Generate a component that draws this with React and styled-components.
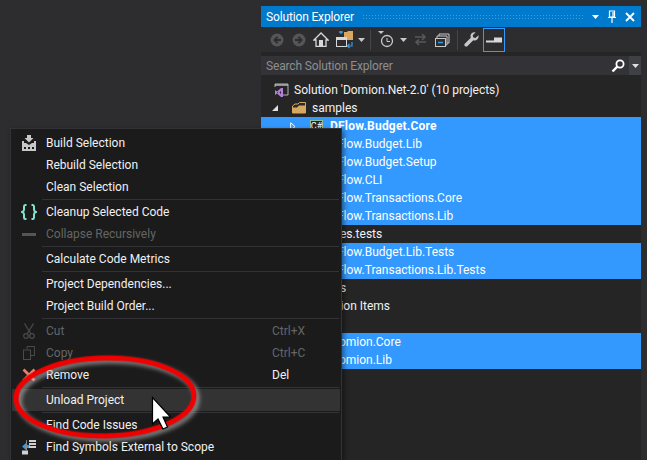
import React from "react";
import styled, { createGlobalStyle } from "styled-components";

const Global = createGlobalStyle`
  html, body {
    margin: 0;
    padding: 0;
    background: #2d2d30;
  }
`;

const Page = styled.div`
  position: relative;
  width: 647px;
  height: 460px;
  overflow: hidden;
  box-sizing: border-box;
  padding: 6px 6px 0 261px;
  background: #2d2d30;
  font-family: "Roboto", "Liberation Sans", sans-serif;
  font-size: 12px;
  color: #f1f1f1;
`;

const Panel = styled.div`
  display: flex;
  flex-direction: column;
  height: 454px;
  background: #252526;
`;

const TitleBar = styled.div`
  display: flex;
  align-items: center;
  height: 21px;
  flex: none;
  padding: 0 0 0 5px;
  background: #007acc;
  color: #fff;
  font-size: 12px;
  letter-spacing: -0.15px;
`;

const Grip = styled.div`
  flex: 1;
  height: 5px;
  margin: 0 8px 0 8px;
  background-image: radial-gradient(#3e9fdd 0.7px, transparent 0.8px);
  background-size: 3px 3px;
`;

const TitleButtons = styled.div`
  display: flex;
  align-items: center;
  gap: 9px;
  padding-right: 6px;
`;

const Toolbar = styled.div`
  display: flex;
  align-items: center;
  height: 25px;
  flex: none;
  padding-left: 5px;
  background: #2d2d30;
`;

const ToolIcon = styled.span`
  display: flex;
  align-items: center;
  justify-content: center;
  width: ${props => props.w || 22}px;
  height: 22px;
  flex: none;
`;

const ToolSep = styled.span`
  width: 1px;
  height: 20px;
  flex: none;
  margin: 0 3px 0 ${props => props.before || 3}px;
  background: #46464a;
`;

const ToggleButton = styled.span`
  display: flex;
  align-items: center;
  justify-content: center;
  width: 20px;
  height: 22px;
  flex: none;
  margin-left: 2px;
  border: 1px solid #3399ff;
`;

const SearchBox = styled.div`
  display: flex;
  align-items: center;
  height: 19px;
  flex: none;
  margin: 4px 0 3px;
  padding-left: 5px;
  background: #333337;
  color: #8e8e8e;
`;

const SearchText = styled.span`
  flex: 1;
  letter-spacing: -0.15px;
`;

const SearchDrop = styled.span`
  display: flex;
  align-items: center;
  justify-content: center;
  width: 12px;
  height: 19px;
  background: #3f3f46;
  margin-left: 4px;
`;

const Tree = styled.div`
  padding-top: 3px;
`;

const Row = styled.div`
  display: flex;
  align-items: center;
  height: 18px;
  padding-left: ${props => props.indent}px;
  background: ${props => (props.selected ? "#3399ff" : "transparent")};
  color: ${props => (props.selected ? "#fff" : "#f1f1f1")};
  font-weight: ${props => (props.bold ? 700 : 400)};
  letter-spacing: ${props => (props.bold ? "0.2px" : "0")};
  white-space: nowrap;
`;

const Expander = styled.span`
  display: flex;
  align-items: center;
  justify-content: center;
  width: 11px;
  flex: none;
  margin-right: 12px;
`;

const RowIcon = styled.span`
  display: flex;
  align-items: center;
  width: 15px;
  flex: none;
  margin-right: 5px;
`;

const Menu = styled.div`
  position: absolute;
  left: 10px;
  top: 128px;
  width: 332px;
  height: 340px;
  box-sizing: border-box;
  padding: 3px 1px 0;
  background: #1b1b1c;
  border: 1px solid #333337;
  box-shadow: 2px 2px 5px rgba(0, 0, 0, 0.45);
`;

const Item = styled.div`
  display: flex;
  align-items: center;
  height: 22px;
  background: ${props => (props.hover ? "#333334" : "transparent")};
  color: ${props => (props.disabled ? "#656565" : "#f1f1f1")};
`;

const ItemIcon = styled.span`
  display: flex;
  align-items: center;
  justify-content: center;
  width: 34px;
  flex: none;
`;

const ItemLabel = styled.span`
  flex: 1;
`;

const Shortcut = styled.span`
  width: 68px;
  flex: none;
`;

const Sep = styled.div`
  height: 1px;
  margin: 1px 1px 1px 30px;
  background: #333337;
`;

const Overlay = styled.svg`
  position: absolute;
  left: 0;
  top: 0;
  pointer-events: none;
`;

const Ring = styled.ellipse`
  fill: none;
  stroke: #f00000;
  stroke-width: 5;
  filter: drop-shadow(3px 3px 2px rgba(190, 190, 190, 0.65));
`;

const CsBadge = styled.span`
  display: flex;
  align-items: center;
  justify-content: center;
  width: 11px;
  height: 11px;
  border: 1px solid #8fbf8f;
  background: #252526;
  color: #fff;
  font-size: 9px;
  font-weight: 400;
  letter-spacing: 0;
  line-height: 1;
`;

const Svg = ({ w, h, children }) => (
  <svg width={w} height={h} viewBox={`0 0 ${w} ${h}`}>{children}</svg>
);

const Caret = ({ color = "#c8c8c8" }) => (
  <Svg w={7} h={4}><path d="M0 0h7L3.500 4z" fill={color} /></Svg>
);

const CircleArrow = ({ flip }) => (
  <Svg w={14} h={14}>
    <circle cx="7" cy="7" r="6.500" fill="#555558" />
    <path d={flip ? "M3 7h6M6.500 4L9.500 7L6.500 10" : "M11 7H5M7.500 4L4.500 7L7.500 10"} stroke="#2d2d30" strokeWidth="2" fill="none" />
  </Svg>
);

const Home = () => (
  <Svg w={16} h={15}>
    <path d="M8 1L1 8h2v6.500h10V8h2z" fill="none" stroke="#d8d8d8" strokeWidth="1.300" />
    <rect x="6" y="8" width="4" height="6.500" fill="#d8d8d8" />
  </Svg>
);

const SyncView = () => (
  <Svg w={19} h={18}>
    <path d="M9 1h3l1-1h5v9H9z" fill="#d9a860" />
    <rect x="1.500" y="6.500" width="10" height="9" fill="#2d2d30" stroke="#d8d8d8" />
    <rect x="2" y="7" width="9" height="2" fill="#d8d8d8" />
    <path d="M4 1h4M6 0v3" stroke="#3a9ae0" strokeWidth="1.400" />
    <path d="M17 11v4h-4M14.500 13l-2 2 2 2" stroke="#3a9ae0" strokeWidth="1.200" fill="none" />
  </Svg>
);

const History = () => (
  <Svg w={16} h={17}>
    <path d="M0 0h6L3 3z" fill="#c8c8c8" />
    <circle cx="9" cy="10" r="5.500" fill="none" stroke="#c8c8c8" strokeWidth="1.300" />
    <path d="M9 7v3.500h3" stroke="#c8c8c8" fill="none" />
  </Svg>
);

const SwapArrows = () => (
  <Svg w={13} h={13}>
    <path d="M1 4h10M8 1l3 3-3 3M12 9H2M5 6.500L2 9l3 3" stroke="#58585b" strokeWidth="1.600" fill="none" />
  </Svg>
);

const CollapseAll = () => (
  <Svg w={15} h={14}>
    <path d="M4 3V1h10v9h-2" fill="none" stroke="#c8c8c8" />
    <path d="M2 5V3h10v9h-2" fill="none" stroke="#c8c8c8" />
    <rect x="0.500" y="5.500" width="10" height="8" fill="#2d2d30" stroke="#c8c8c8" />
    <path d="M3 9.500h5" stroke="#3a9ae0" strokeWidth="1.500" />
  </Svg>
);

const Wrench = () => (
  <Svg w={15} h={15}>
    <path d="M14.500 3.200l-3 2.800-2.200-.6-.6-2.200L11.500.4C9.500-.3 7 1 6.600 3.200c-.2 1 0 1.800.2 2.500L.5 12c-.7 1.600 1 3.200 2.500 2.400l6.300-6.200c2.800 1 5.900-1.200 5.200-5z" fill="#c8c8c8" />
  </Svg>
);

const PropsDash = () => (
  <Svg w={16} h={6}>
    <rect x="0" y="3.500" width="16" height="2" fill="#d8d8d8" />
    <rect x="8" y="0.500" width="8" height="4" fill="#d8d8d8" />
  </Svg>
);

const Pin = () => (
  <Svg w={8} h={13}>
    <path d="M1.500 1h5v6h-5zM0 7.500h8M4 8v5M5 2v5" stroke="#fff" strokeWidth="1.200" fill="none" />
  </Svg>
);

const Close = () => (
  <Svg w={10} h={10}>
    <path d="M1 1l8 8M9 1l-8 8" stroke="#fff" strokeWidth="1.800" />
  </Svg>
);

const Magnifier = () => (
  <Svg w={14} h={14}>
    <circle cx="9" cy="5" r="3.600" fill="none" stroke="#fff" strokeWidth="1.800" />
    <path d="M6.300 7.700L1.500 12.500" stroke="#fff" strokeWidth="2.400" />
  </Svg>
);

const SolutionIcon = () => (
  <Svg w={15} h={14}>
    <path d="M1 4V1h13v11H9" fill="none" stroke="#b4b4b4" />
    <path d="M1 2h13" stroke="#b4b4b4" strokeWidth="1.500" />
    <path d="M1 7l2 1.500L7 5h2v9H7l-4-3.500L1 12zM3 9.500l1 .8 0-1.600zM7 8L5.500 9.500 7 11z" fill="#b180d7" fillRule="evenodd" />
  </Svg>
);

const FolderIcon = () => (
  <Svg w={14} h={12}>
    <path d="M.5 4L3 2h3l1.500-1.500h6v10.500H.5z" fill="#2a2a2a" stroke="#d9a860" />
    <path d="M1 5.500h4L7 3.500h6V11H1z" fill="#d9a860" />
  </Svg>
);

const ExpandedArrow = () => (
  <Svg w={6} h={6}><path d="M6 0v6H0z" fill="#e0e0e0" /></Svg>
);

const CollapsedArrow = () => (
  <Svg w={6} h={9}><path d="M.7 .8v7.400L5 4.500z" fill="none" stroke="#fff" /></Svg>
);

const BuildIcon = () => (
  <Svg w={16} h={16}>
    <path d="M6 0h4v3h2.500L8 7.500 3.500 3H6z" fill="#c8c8c8" />
    <path d="M1 6h2v2h2l3 2 3-2h2V6h2v10H1z" fill="#c8c8c8" />
    <path d="M3 12h2v2H3zM7 12h2v2H7zM11 12h2v2h-2z" fill="#1b1b1c" />
  </Svg>
);

const BracesIcon = () => (
  <Svg w={16} h={16}>
    <path d="M5.500 1H4.200C3.200 1 3 1.800 3 2.600v3.200C3 7 2.200 7.600 1 8c1.200.4 2 1 2 2.200v3.200c0 .8.2 1.600 1.200 1.600h1.300M10.500 1h1.300C12.800 1 13 1.800 13 2.600v3.200C13 7 13.800 7.600 15 8c-1.200.4-2 1-2 2.200v3.200c0 .8-.2 1.600-1.200 1.600h-1.300" fill="none" stroke="#7fe3cf" strokeWidth="2" />
  </Svg>
);

const DashIcon = () => (
  <Svg w={14} h={3}><rect width="14" height="3" fill="#555558" /></Svg>
);

const CutIcon = () => (
  <Svg w={12} h={16}>
    <path d="M1.500 .5L8 11M10.500 .5L4 11" stroke="#4a4a4d" strokeWidth="1.300" fill="none" />
    <circle cx="3" cy="13" r="2.300" fill="none" stroke="#4a4a4d" strokeWidth="1.200" />
    <circle cx="9" cy="13" r="2.300" fill="none" stroke="#4a4a4d" strokeWidth="1.200" />
  </Svg>
);

const CopyIcon = () => (
  <Svg w={12} h={14}>
    <path d="M4 3V.5h7.500v9H8" fill="none" stroke="#4a4a4d" />
    <rect x=".5" y="4" width="7" height="9.500" fill="none" stroke="#4a4a4d" />
  </Svg>
);

const RemoveIcon = () => (
  <Svg w={14} h={14}>
    <path d="M1.500 1.500l11 11M12.500 1.500l-11 11" stroke="#ea7f68" strokeWidth="2.800" />
  </Svg>
);

const SymbolsIcon = () => (
  <Svg w={15} h={15}>
    <path d="M0 6.500L4 3v2h4v3H4v2z" fill="#3a9ae0" />
    <rect x="0" y="10.500" width="6" height="4" fill="#d0d0d0" />
    <path d="M5 .5H4.500v10" stroke="#8a8a8a" fill="none" />
    <path d="M7 1h7M7 4h7M7 7h7" stroke="#d0d0d0" strokeWidth="1.800" />
  </Svg>
);

const treeRows = [
  { label: "Solution 'Domion.Net-2.0' (10 projects)", indent: 13, icon: <SolutionIcon /> },
  { label: "samples", indent: 8, arrow: <ExpandedArrow />, icon: <FolderIcon /> },
  { label: "DFlow.Budget.Core", indent: 26, arrow: <CollapsedArrow />, icon: <CsBadge>C#</CsBadge>, selected: true, bold: true },
  { label: "DFlow.Budget.Lib", indent: 68, selected: true },
  { label: "DFlow.Budget.Setup", indent: 68, selected: true },
  { label: "DFlow.CLI", indent: 68, selected: true },
  { label: "DFlow.Transactions.Core", indent: 68, selected: true },
  { label: "DFlow.Transactions.Lib", indent: 68, selected: true },
  { label: "samples.tests", indent: 46 },
  { label: "DFlow.Budget.Lib.Tests", indent: 68, selected: true },
  { label: "DFlow.Transactions.Lib.Tests", indent: 68, selected: true },
  { label: "Scripts", indent: 48 },
  { label: "Solution Items", indent: 52 },
  { label: "src", indent: 51 },
  { label: "Domion.Core", indent: 70, selected: true },
  { label: "Domion.Lib", indent: 70, selected: true },
];

const menuItems = [
  { label: "Build Selection", icon: <BuildIcon /> },
  { label: "Rebuild Selection" },
  { label: "Clean Selection" },
  { sep: true },
  { label: "Cleanup Selected Code", icon: <BracesIcon /> },
  { label: "Collapse Recursively", icon: <DashIcon />, disabled: true },
  { sep: true },
  { label: "Calculate Code Metrics" },
  { sep: true },
  { label: "Project Dependencies..." },
  { label: "Project Build Order..." },
  { sep: true },
  { label: "Cut", icon: <CutIcon />, shortcut: "Ctrl+X", disabled: true },
  { label: "Copy", icon: <CopyIcon />, shortcut: "Ctrl+C", disabled: true },
  { label: "Remove", icon: <RemoveIcon />, shortcut: "Del" },
  { sep: true },
  { label: "Unload Project", hover: true },
  { sep: true },
  { label: "Find Code Issues" },
  { label: "Find Symbols External to Scope", icon: <SymbolsIcon /> },
];

export default function App() {
  return (
    <Page>
      <Global />
      <Panel>
        <TitleBar>
          Solution Explorer
          <Grip />
          <TitleButtons>
            <Caret color="#fff" />
            <Pin />
            <Close />
          </TitleButtons>
        </TitleBar>
        <Toolbar>
          <ToolIcon><CircleArrow /></ToolIcon>
          <ToolIcon><CircleArrow flip /></ToolIcon>
          <ToolIcon><Home /></ToolIcon>
          <ToolIcon w={24}><SyncView /></ToolIcon>
          <ToolIcon w={11}><Caret /></ToolIcon>
          <ToolSep />
          <ToolIcon w={24}><History /></ToolIcon>
          <ToolIcon w={10}><Caret /></ToolIcon>
          <ToolIcon w={24}><SwapArrows /></ToolIcon>
          <ToolIcon w={20}><CollapseAll /></ToolIcon>
          <ToolSep before={5} />
          <ToolIcon w={20}><Wrench /></ToolIcon>
          <ToggleButton><PropsDash /></ToggleButton>
        </Toolbar>
        <SearchBox>
          <SearchText>Search Solution Explorer</SearchText>
          <Magnifier />
          <SearchDrop><Caret color="#e0e0e0" /></SearchDrop>
        </SearchBox>
        <Tree>
          {treeRows.map(r => (
            <Row key={r.label} indent={r.indent} selected={r.selected} bold={r.bold}>
              {r.arrow && <Expander>{r.arrow}</Expander>}
              {r.icon && <RowIcon>{r.icon}</RowIcon>}
              {r.label}
            </Row>
          ))}
        </Tree>
      </Panel>
      <Menu>
        {menuItems.map((m, i) =>
          m.sep ? (
            <Sep key={i} />
          ) : (
            <Item key={m.label} hover={m.hover} disabled={m.disabled}>
              <ItemIcon>{m.icon}</ItemIcon>
              <ItemLabel>{m.label}</ItemLabel>
              {m.shortcut && <Shortcut>{m.shortcut}</Shortcut>}
            </Item>
          )
        )}
      </Menu>
      <Overlay width="647" height="460" viewBox="0 0 647 460">
        <Ring cx="105" cy="397" rx="89" ry="39" transform="rotate(-1 105 397)" />
        <path d="M152.500 397.500V424l5.500-5 5 10 4.500-2-4.500-10h7.500z" fill="#fff" stroke="#000" strokeWidth="1.200" />
      </Overlay>
    </Page>
  );
}
